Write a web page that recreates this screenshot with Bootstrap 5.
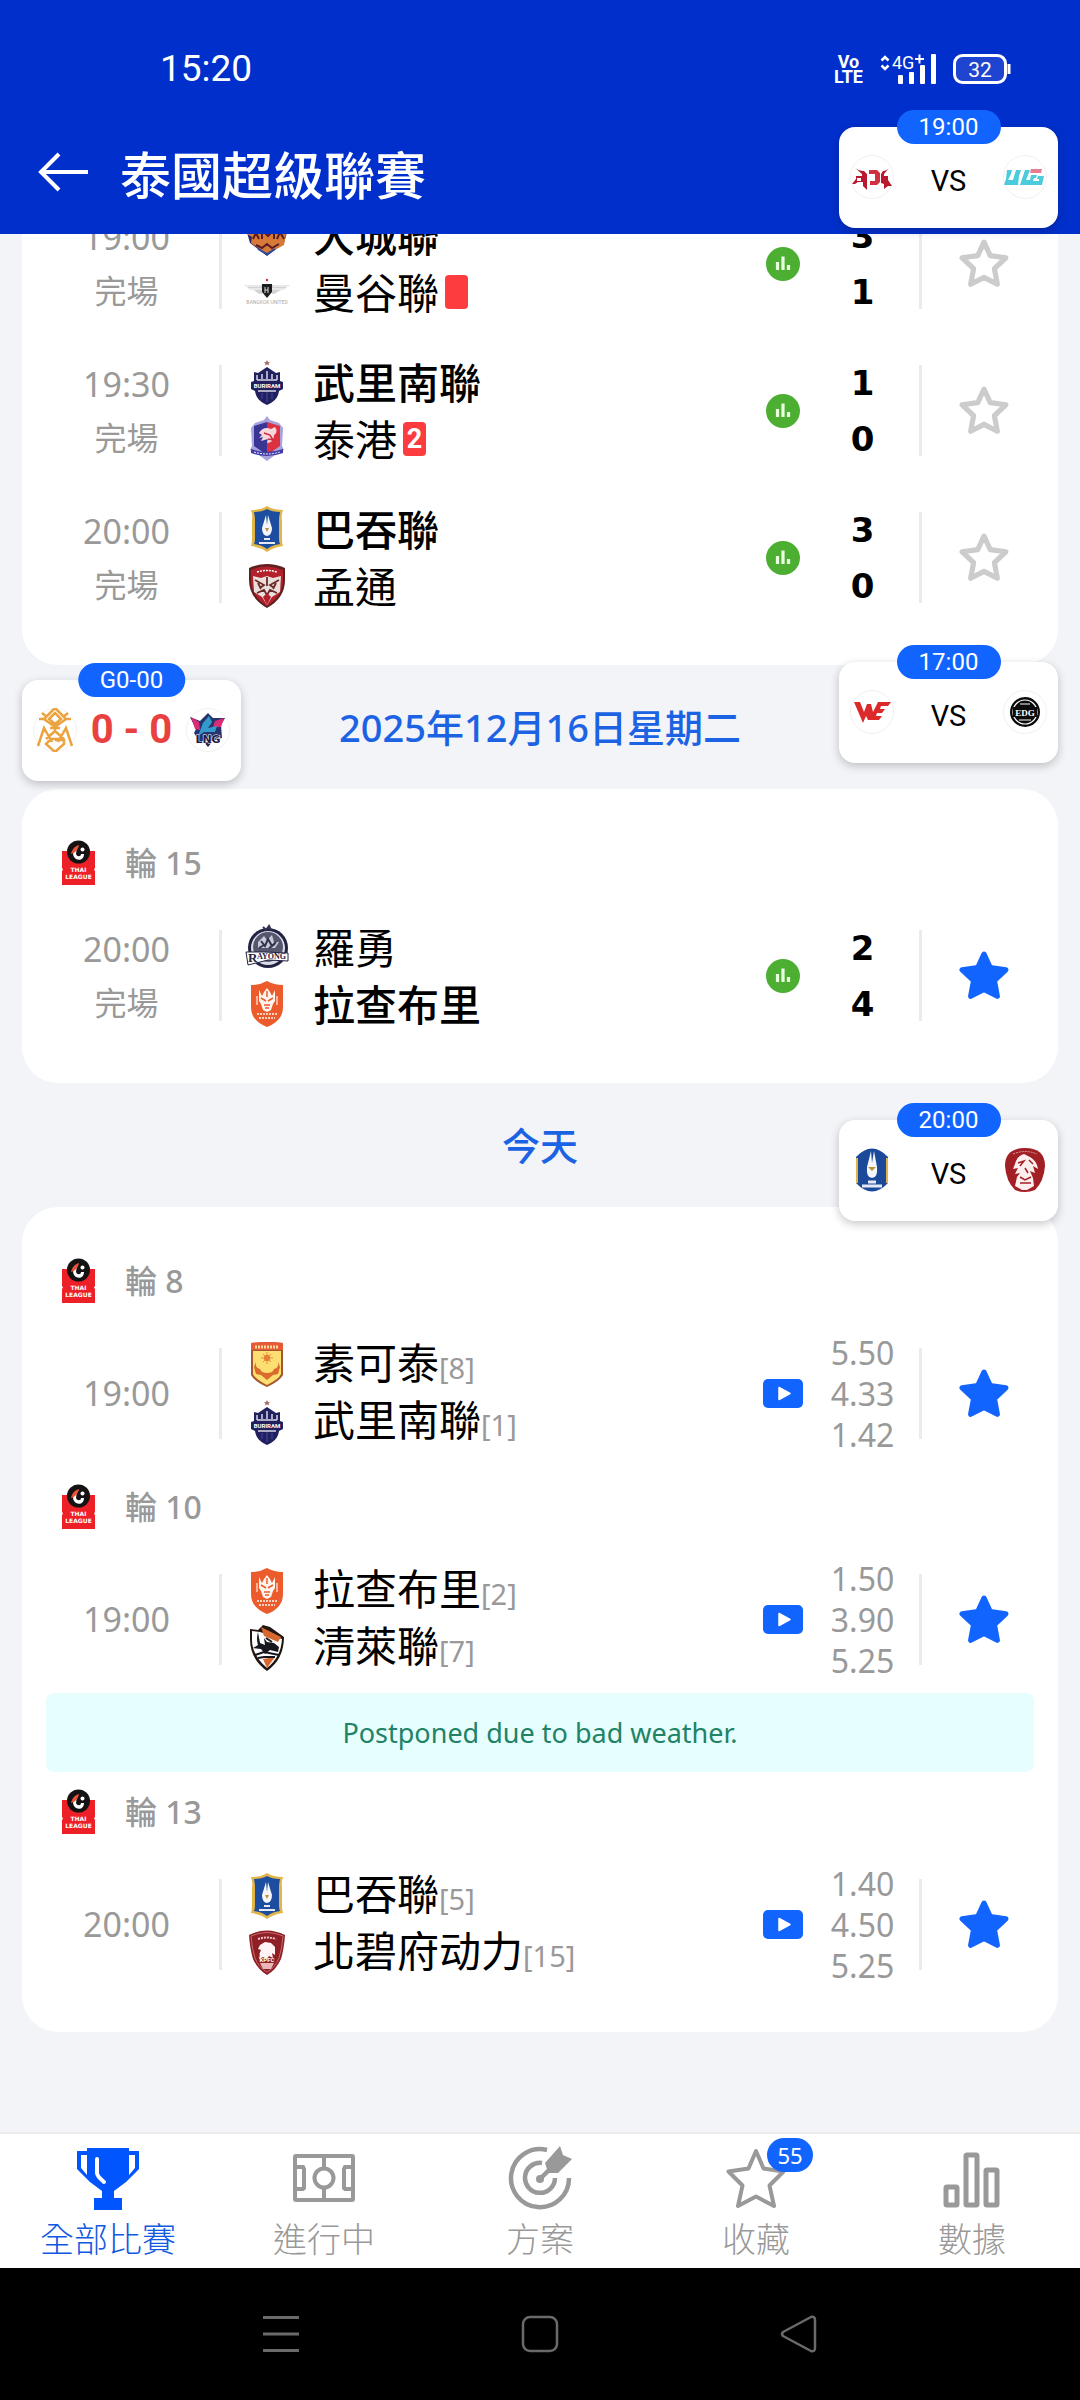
<!DOCTYPE html>
<html lang="zh-Hant">
<head>
<meta charset="utf-8">
<meta name="viewport" content="width=device-width, initial-scale=1">
<title>泰國超級聯賽</title>
<link rel="stylesheet" href="https://cdn.jsdelivr.net/npm/bootstrap@5.3.0/dist/css/bootstrap.min.css">
<style>
  :root { --brand: #1264ff; --grey: #999; --line: #ebebed; }
  body { background: #f2f4f8; color: #000; font-family: "Noto Sans", "Noto Sans CJK TC", sans-serif; }
  svg { display: block; flex: none; }
  .app { min-height: 100vh; }

  /* top bar */
  .topbar { background: #002fcc; color: #fff; z-index: 2; padding-bottom: 22px; }
  .statusbar { height: 138px; padding-left: 160px; padding-right: 68px; font-family: Roboto, sans-serif; }
  .clock { font-size: 37px; line-height: 46px; }
  .volte { font: 700 18px/15px "Liberation Sans Narrow", Roboto, sans-serif; }
  .titlebar { height: 74px; padding-left: 36px; gap: 30px; }
  .titlebar h1 { font-size: 51px; line-height: 74px; font-weight: 500; }

  /* match cards */
  .feed { padding: 0 22px; margin-top: -44px; }
  .panel { background: #fff; border-radius: 36px; padding: 34px 12px; }
  .panel.first { padding-top: 0; border-radius: 0 0 36px 36px; }
  .day { height: 124px; color: #1c63e4; font-size: 38px; line-height: 124px; font-weight: 500; }
  .round { height: 79px; padding: 0 28px; gap: 30px; color: var(--grey); font-size: 32px; font-weight: 500; }
  .match { height: 147px; }
  .when { width: 185px; color: var(--grey); font-size: 34px; line-height: 53px; }
  .when small { display: block; font-size: 32px; }
  .rule { width: 3px; height: 91px; background: var(--line); }
  .teams { padding-left: 22px; }
  .team { height: 57px; gap: 23px; font-size: 42px; line-height: 57px; white-space: nowrap; }
  .team i { color: var(--grey); font-size: 29px; font-style: normal; }
  .won { font-weight: 500; }
  .redcard { width: 23px; height: 34px; border-radius: 4px; background: #fd3c40; color: #fff; font: 700 27px/34px Roboto, sans-serif; margin-left: 6px; }
  .media { width: 46px; }
  .score { width: 113px; font: 700 34px/56px "DejaVu Sans", sans-serif; }
  .odds { width: 113px; color: var(--grey); font-size: 32px; line-height: 41px; }
  .fav { width: 124px; color: var(--brand); }
  .fav.off { color: #ccc; }
  .notice { height: 79px; margin: 0 12px; border-radius: 8px; background: #e6fffe; color: #218266; font: 400 27px/79px "Noto Sans", sans-serif; }

  /* floating match widgets */
  .floater { position: absolute; right: 22px; z-index: 3; width: 219px; height: 101px; border-radius: 16px; background: #fff; color: #000; box-shadow: 0 3px 10px rgba(0,0,0,.22); padding: 0 11px 2px; font-family: Roboto, sans-serif; text-decoration: none; }
  .floater b { position: absolute; top: -17px; left: 50%; transform: translateX(-50%); min-width: 104px; height: 34px; padding: 0 22px; border-radius: 17px; background: var(--brand); color: #fff; font-weight: 400; font-size: 24px; line-height: 34px; text-align: center; white-space: nowrap; }
  .floater span { font-size: 29px; line-height: 44px; padding-top: 8px; }
  .floater .live { font-size: 40px; font-weight: 700; color: #e9413f; padding-top: 0; }
  .f1 { top: 127px; } .f2 { top: 662px; } .f3 { top: 1120px; }
  .f4 { top: 680px; right: auto; left: 22px; }

  /* bottom bars */
  .tabs { background: #fff; border-top: 2px solid #ebebeb; height: 136px; padding-top: 10px; }
  .tabs a { color: var(--grey); text-decoration: none; font-size: 34px; line-height: 46px; font-weight: 300; }
  .tabs a.active { color: #1259e2; }
  .count { position: absolute; left: 44px; top: -6px; width: 46px; height: 34px; border-radius: 17px; background: var(--brand); color: #fff; font: 400 22px/34px "Noto Sans", sans-serif; }
  .sysnav { background: #000; height: 132px; color: #6a6a6a; }
  .sysnav button { width: 24%; }
</style>
<script src="https://cdn.jsdelivr.net/npm/bootstrap@5.3.0/dist/js/bootstrap.bundle.min.js"></script>
</head>
<body>

<svg width="0" height="0" class="position-absolute" aria-hidden="true">
  <defs>
    <symbol id="star" viewBox="0 0 48 48"><path d="M24 3 30 16 45 18 34 28.500 36.800 43.500 24 36.800 11.200 43.500 14 28.500 3 18 18 16Z" stroke="currentColor" stroke-width="5" stroke-linejoin="round"/></symbol>
    <symbol id="stats" viewBox="0 0 34 34"><circle cx="17" cy="17" r="17" fill="#4caf32"/><path d="M11.500 15v8M17 9.500v13.500M22.500 18v5" stroke="#eaffdf" stroke-width="3.200"/></symbol>
    <symbol id="play" viewBox="0 0 40 29"><rect width="40" height="29" rx="5" fill="#1264ff"/><path d="M16 8.500v12l11-6z" fill="#fff" stroke="#fff" stroke-width="1.500" stroke-linejoin="round"/></symbol>

    <symbol id="league" viewBox="0 0 33 44">
      <path d="M0 10H33V27l-1 1.500 1 1.500V44H0V30l1-1.500L0 27Z" fill="#ee2027"/>
      <circle cx="16.500" cy="11" r="11.500" fill="#151213"/>
      <path d="M15 6c-5 4-5 9-1 12 4 2 8 0 8-5l-3 0c0 3-4 3-5 0Z" fill="#fff"/><path d="M17 4c-4 1-7 4-8 9 4-1 7-4 8-9" fill="#e8543b"/><circle cx="20.500" cy="8.500" r="2" fill="#fff"/>
      <text x="16.500" y="31" font-family="DejaVu Sans" font-size="6" font-weight="700" fill="#fff" text-anchor="middle">THAI</text>
      <text x="16.500" y="38" font-family="DejaVu Sans" font-size="6" font-weight="700" fill="#fff" text-anchor="middle">LEAGUE</text>
    </symbol>

    <symbol id="ayutthaya" viewBox="0 0 46 46">
      <path d="M2 17 23 3l21 14-4 14-17 13L6 31Z" fill="#292765"/><path d="M3 22l10-3 3-3 6 3 5-3 5 4 11-4-3 17-17 9-16-11 1-6Z" fill="#d77a38"/>
      <path d="M9 27l3-6 3 6m3-6v6m3-6 3 3 3-3m3 6v-7m3 7 3-7 4 7M12 33l6 3 5-4 5 4 7-4" fill="none" stroke="#5a1d24" stroke-width="2"/><path d="M14 37l9 5 8-5" stroke="#2c4a9b" stroke-width="2" fill="none"/>
    </symbol>
    <symbol id="bangkok" viewBox="0 0 46 46">
      <path d="M0 16h18v9C13 25 12 21 8 21 4 21 5 18 0 16ZM46 16H28v9c5 0 6-4 10-4 4 0 3-3 8-5Z" fill="#d2d2d2"/><path d="M2 17h15M5 20h13M29 17h15M28 20h13" stroke="#fff"/>
      <path d="M18 15h10v8l-5 6-5-6Z" fill="#1d1d1f"/><path d="M21 18v6m0-3h3m0-3v6" stroke="#ddd" stroke-width="1"/><circle cx="23" cy="11" r="1.200" fill="#c33"/>
      <text x="23" y="35" font-family="Roboto" font-size="5" fill="#aaa" text-anchor="middle">BANGKOK UNITED</text>
    </symbol>
    <symbol id="buriram" viewBox="0 0 46 46">
      <path d="M23 1l1 2h2l-1.500 1.500.5 2L23 5.500 21 6.500l.5-2L20 3h2Z" fill="#a76d6a"/>
      <path d="M10 13l4 1 3-2 6-4 6 4 3 2 4-1v9l3 1v7l-4 2c-1 7-5 11-12 14-7-3-11-7-12-14l-4-2v-7l3-1Z" fill="#20205f"/>
      <path d="M13 16v5M18 15v5M23 12v8M28 15v5M33 16v5M13 21h20M14 32h18" stroke="#d6d6e8" stroke-width="1.500"/>
      <path d="M18 34v6M23 33v10M28 34v6" stroke="#4b4ba0" stroke-width="1"/>
      <text x="23" y="28.500" font-family="Roboto" font-size="6" font-weight="700" fill="#fff" text-anchor="middle">BURIRAM</text>
    </symbol>
    <symbol id="port" viewBox="0 0 46 46">
      <path d="M23 0l3 4 9 3 4 5-1 18 2 4-9 5-8 6-8-6-9-5 2-4-1-18 4-5 9-3Z" fill="#a7a3dc"/>
      <path d="M23 6l13 4v20l-13 9V6Z" fill="#dd3040"/><path d="M23 6 10 10v20l13 9Z" fill="#3a3494"/>
      <path d="M15 17c3-5 7-6 12-4l4-2c3 4 1 7-1 8 0 5-3 8-7 8l1-4-7 2 2-4-4 1 3-3Z" fill="#f6d7dc"/><path d="M20 17l6 2 3 5-5-1" stroke="#cf2740" fill="none" stroke-width="1.500"/>
      <path d="M7 33q16 6 32 0v4q-16 6-32 0Z" fill="#3e3aa6"/><path d="M10 36q13 4 26 0" stroke="#fff" fill="none" stroke-dasharray="2 1"/>
    </symbol>
    <symbol id="bgpathum" viewBox="0 0 46 46">
      <path d="M7 4q10 0 16-4 6 4 16 4-2 6-1 10v19q0 4 1 7-9 1-16 6-7-5-16-6 1-3 1-7V14q1-4-1-10Z" fill="#e2b548"/>
      <path d="M10 6q8 0 13-3 5 3 13 3-1 5-1 8v19q0 3 1 5-8 1-13 5-5-4-13-5 1-2 1-5V14q0-3-1-8Z" fill="#1c4d9f"/>
      <path d="M22 9l-4 13q0 7 5 8 5-1 5-8L24 9l-1 10Z" fill="#f4f6fb"/><path d="M21 22h4l-2 4Z" fill="#b89339"/><path d="M20 33h6M15 37h16" stroke="#e6e9f5" stroke-width="2"/>
    </symbol>
    <symbol id="muangthong" viewBox="0 0 46 46">
      <path d="M5 5q18-8 36 0v12q0 18-18 28Q5 35 5 17Z" fill="#5f2020"/><path d="M7 7q16-7 32 0v10q0 16-16 26Q7 33 7 17Z" fill="#b3202b"/>
      <path d="M9 13l8 2 6-2 6 2 8-2-1 16-8 5-5 8-5-8-8-5Z" fill="#e9dfdb"/>
      <path d="M11 17l9 5-4 3M35 17l-9 5 4 3M23 14v9M13 30l7-3 3 5 3-5 7 3M14 20l3 6M32 20l-3 6" stroke="#6b2a28" stroke-width="1.800" fill="none"/><path d="M19 34l4-4 4 4-4 8Z" fill="#b3202b"/><path d="M13 9q10-3 20 0" stroke="#fff" stroke-width="1.500" stroke-dasharray="2 1" fill="none"/>
    </symbol>
    <symbol id="rayong" viewBox="0 0 46 46">
      <circle cx="24" cy="24" r="20" fill="#222342"/><circle cx="24" cy="24" r="17" fill="#dcdce6"/><circle cx="24" cy="23" r="15" fill="#55576f"/>
      <path d="M14 18l6-6 3 4 5-5 2 7 5 0-4 6H14Z" fill="#c9cad8"/><path d="M17 17l4 5 3-7 4 7 4-4M15 24l5-3m5 3 6-4M19 3l3 3 3-4 2 4" stroke="#30324f" fill="none" stroke-width="2"/>
      <path d="M2 28l18 0 24 1v8L24 36 4 41Z" fill="#fff" stroke="#222342"/>
      <text x="4" y="38" font-family="Liberation Serif" font-size="13" font-weight="700" fill="#22233f">R</text><text x="13" y="35" font-family="Liberation Serif" font-size="8" font-weight="700" fill="#22233f">AYONG</text>
    </symbol>
    <symbol id="ratchaburi" viewBox="0 0 46 46">
      <path d="M7 4q9 0 16-4 7 4 16 4v22q0 14-16 20Q7 40 7 26Z" fill="#ec5b2b"/>
      <path d="M15 9l3 6 2-4 3-4 3 4 2 4 3-6 0 11-2 3-2 6-4 2-4-2-2-6-2-3Z" fill="#fff5ef"/><path d="M17 17l5 3m7-3-5 3M20 24h6M21 27h4M23 10v6" stroke="#ec5b2b" stroke-width="1.500"/><path d="M13 24v-9m20 0v9" stroke="#fbd2bf" stroke-width="1.500"/><path d="M13 33h20M15 37h16" stroke="#fbd2bf" stroke-width="1.800" stroke-dasharray="2 1"/>
    </symbol>
    <symbol id="sukhothai" viewBox="0 0 46 46">
      <path d="M7 1q16-2 32 0v32q-3 6-16 12Q10 39 7 33Z" fill="#a5572d"/><path d="M9 9h28v23q-2 5-14 11Q11 37 9 32Z" fill="#fcdf70"/><path d="M7 1q16-2 32 0v7H7Z" fill="#e65a35"/><path d="M11 5h24" stroke="#fbd99a" stroke-width="3" stroke-dasharray="2 1"/>
      <path d="M12 20q-1 6 4 7 1 4 7 4t7-4q5-1 4-7l2 5-2 7-5 1-6 5-6-5-5-1-2-7Z" fill="#da6b2d"/><circle cx="23" cy="16" r="3" fill="#e1632c"/><path d="M23 10v12M17 16h12M19 12l8 8m0-8-8 8" stroke="#e98a3f"/>
    </symbol>
    <symbol id="chiangrai" viewBox="0 0 46 46">
      <path d="M6 4l8 1 5-5 7 2 14 10q0 22-17 34Q6 34 6 14Z" fill="#21150f"/><path d="M8 6l8 1 22 7q-1 18-15 29Q8 30 8 15Z" fill="#fff"/>
      <path d="M17 2l20 10-3 5-14-6Z" fill="#d6692f"/><path d="M19 34l12-2-8 11Z" fill="#d6692f"/>
      <path d="M14 7q-2 8 0 13l-5 3 8 1 4 5 5-4 8 2 1-5-5-4-7-1-3-4 1 7-5-2Z" fill="#17171f"/><path d="M11 30l9-3 15 3M14 33l6-1 11 0M22 13l6 4" stroke="#17171f" stroke-width="2" fill="none"/>
    </symbol>
    <symbol id="kanchanaburi" viewBox="0 0 46 46">
      <path d="M5 5q18-9 36 0-1 14-4 24-5 11-14 16Q14 40 9 29 6 19 5 5Z" fill="#8e1f27"/><path d="M7 6q16-7 32 0-1 13-4 22-4 10-12 14-8-4-12-14Q8 19 7 6Z" fill="none" stroke="#c6696b"/>
      <path d="M15 25l2-5-3-1 2-4 5-3 6 1 4 4 0 8-3-2 1 5-4-2-2 3-4-2-4 2 1-5Z" fill="#fff5f4"/><path d="M14 9q9-3 18 0" stroke="#f0c4c4" stroke-width="2" stroke-dasharray="2 1" fill="none"/><path d="M16 33h14l-3 6h-8Z" fill="#eab7b8"/>
      <text x="23" y="32" font-family="Roboto" font-size="6" font-weight="700" fill="#fff" text-anchor="middle">KPFC</text>
    </symbol>

    <symbol id="ring" viewBox="0 0 44 44"><circle cx="22" cy="22" r="21.500" fill="#fff" stroke="#f3f0f0"/></symbol>
    <symbol id="jdg" viewBox="0 0 44 44"><use href="#ring"/><path d="M4 12q4 4 10 4l3 3v16l-4-4v-4H8l-3 2-3 0 4-5v-3h6v-2Z" fill="#b9182f"/><path d="M19 15h8l3 3v9l-3 3h-7v-4h5v-7h-6Z" fill="#d0303f"/><path d="M40 12q-3 4-7 4l-2 3v9l3 1v5l4-3h4l-4-6v-4h-4v-2Z" fill="#b9182f"/><path d="M7 23h4v3H7Z" fill="#fff"/></symbol>
    <symbol id="blg" viewBox="0 0 44 44"><use href="#ring"/><path d="M4 15h5l-1 4-3 6h5l3-10h5l-2 6-1 9H1l2-6ZM22 15h5l-4 10h5l-1 5H17ZM28 20h6l-1 3h-2l-1 3h6l0-2h-2l1-3h6l-2 9H26Z" fill="#4bcbdc"/><path d="M28 14h11l-1 4H27Z" fill="#e77c91"/></symbol>
    <symbol id="we" viewBox="0 0 44 44"><use href="#ring"/><path d="M4 12h6l4 10 3-8h4l2 8 5-10h13l-3 4h-7l-1 3h5l-3 4h-5l-1 3h6l-3 4H18l-2-4-3 7Z" fill="#dc2a2b"/></symbol>
    <symbol id="edg" viewBox="0 0 44 44"><use href="#ring"/><circle cx="22" cy="22" r="15" fill="#0b0b0b"/><circle cx="22" cy="22" r="12" fill="none" stroke="#fff" stroke-width="1.200"/><path d="M10 17h24v10H10Z" fill="#0b0b0b"/><text x="22" y="25.500" font-family="Liberation Serif" font-size="9" font-weight="700" fill="#fff" text-anchor="middle">EDG</text><path d="M17 14h10M16 30h12" stroke="#aaa" stroke-width="1.500"/></symbol>
    <symbol id="orange" viewBox="0 0 44 44"><use href="#ring"/><path d="M11 11l6-6 5-5 5 5 6 6-7 5-4 3-4-3Zm5 0 6-6 6 6-6 5ZM6 11h5M33 11h5M9 5l5 4M35 5l-5 4M5 38l6-18 8 14M39 38l-6-18-8 14M22 20v5m-5-5h10M13 31l9-8 9 8M30 31H18l-5 5 9 8 9-8v-4h-9" fill="none" stroke="#eba33f" stroke-width="2.500"/></symbol>
    <symbol id="lng" viewBox="0 0 44 44"><use href="#ring"/><path d="M4 9l10 4 8-8 5 5 12 0-4 7 1 13-10 3-13 0-5-8 2-4Z" fill="#27356f"/><path d="M5 9l8 5 1 8-5-1ZM38 10l-9 3-2 6 8 0Z" fill="#dc2a77"/><path d="M17 15l6-7 3 6-4 6 9-2-2 6-11 0-6 4Z" fill="#3499cb"/><path d="M18 34h8l-4 5Z" fill="#27204b"/><text x="22" y="35" font-family="DejaVu Sans" font-size="11" font-weight="700" fill="#251b49" stroke="#fff" stroke-width="1" paint-order="stroke" text-anchor="middle">LNG</text></symbol>
    <symbol id="bgcrop" viewBox="0 0 44 44"><path d="M6 9Q22-8 38 9v26q-16 17-32 0Z" fill="#1c4a9a"/><path d="M7 10v25M37 10v25" stroke="#e2b24b" stroke-width="2"/><path d="M21 3l-4 16q-1 11 5 11t5-11L24 3l-2 12Z" fill="#f4f6fb"/><path d="M18 19h8l-4 4Z" fill="#b89339"/><path d="M18 34h8M12 38h20" stroke="#e6e9f5" stroke-width="3"/></symbol>
    <symbol id="kcrop" viewBox="0 0 44 44"><path d="M2 18Q2 0 22 0t20 18q-1 15-10 24-10 4-20 0Q3 33 2 18Z" fill="#a31f26"/><path d="M12 16q2-8 9-10l6 3q7 4 8 12l-5-3 2 7-5-2 3 7 1 8-7 4h-5l-7-4 2-9 3-4-5 1 3-6-5 1Z" fill="#fcefee"/><path d="M15 15l6-2-4 5m9-6 4 4M17 29l5 3 6-3m-11 6h11M22 20l3 5" stroke="#a31f26" fill="none" stroke-width="1.500"/><path d="M10 6q12-5 24 0" stroke="#e0a0a0" fill="none" stroke-dasharray="2 1"/></symbol>
  </defs>
</svg>

<div class="app d-flex flex-column position-relative">

  <header class="topbar position-relative">
    <div class="statusbar d-flex align-items-center justify-content-between">
      <span class="clock">15:20</span>
      <div class="d-flex align-items-center gap-3">
        <div class="volte text-center">Vo<br>LTE</div>
        <svg width="58" height="32" viewBox="0 0 58 32" fill="#fff"><path d="M2.500 7.500 6 4l3.500 3.500M2.500 12.500 6 16l3.500-3.500" fill="none" stroke="#fff" stroke-width="2.500"/><text x="13" y="16" font-family="Roboto" font-size="18">4G</text><path d="M36 6h9M40.500 1.500v9" stroke="#fff" stroke-width="2"/><rect x="19" y="22" width="5" height="9" rx="1"/><rect x="30" y="19" width="5" height="12" rx="1"/><rect x="41" y="12" width="5" height="19" rx="1"/><rect x="52" y="1" width="5" height="30" rx="1"/></svg>
        <svg width="59" height="32" viewBox="0 0 59 32"><rect x="1.500" y="2.500" width="51" height="27" rx="8" fill="#1f44cf" stroke="#fff" stroke-width="3"/><path d="M56 11v10" stroke="#fff" stroke-width="3"/><text x="27" y="23.500" font-family="Roboto" font-size="21" fill="#fff" text-anchor="middle">32</text></svg>
      </div>
    </div>
    <div class="titlebar d-flex align-items-center">
      <button class="btn p-0 border-0 text-white" aria-label="返回"><svg width="54" height="46" viewBox="0 0 54 46"><path d="M23 2 5 20l18 18M5 20h47" fill="none" stroke="#fff" stroke-width="4"/></svg></button>
      <h1 class="m-0">泰國超級聯賽</h1>
    </div>
  </header>

  <a class="floater f1 d-flex align-items-center justify-content-between" href="#"><b>19:00</b><svg width="44" height="44"><use href="#jdg"/></svg><span>VS</span><svg width="44" height="44"><use href="#blg"/></svg></a>
  <a class="floater f2 d-flex align-items-center justify-content-between" href="#"><b>17:00</b><svg width="44" height="44"><use href="#we"/></svg><span>VS</span><svg width="44" height="44"><use href="#edg"/></svg></a>
  <a class="floater f3 d-flex align-items-center justify-content-between" href="#"><b>20:00</b><svg width="44" height="44"><use href="#bgcrop"/></svg><span>VS</span><svg width="44" height="44"><use href="#kcrop"/></svg></a>
  <a class="floater f4 d-flex align-items-center justify-content-between" href="#"><b>G0-00</b><svg width="44" height="44"><use href="#orange"/></svg><span class="live">0 - 0</span><svg width="44" height="44"><use href="#lng"/></svg></a>

  <main class="feed">
    <section class="panel first">
      <div class="match d-flex align-items-center">
        <div class="when text-center">19:00<small>完場</small></div><div class="rule"></div>
        <div class="teams flex-grow-1">
          <div class="team d-flex align-items-center"><svg width="46" height="46"><use href="#ayutthaya"/></svg><span class="won">大城聯</span></div>
          <div class="team d-flex align-items-center"><svg width="46" height="46"><use href="#bangkok"/></svg><span class="d-flex align-items-center">曼谷聯<span class="redcard"></span></span></div>
        </div>
        <div class="media d-flex justify-content-center"><svg width="34" height="34"><use href="#stats"/></svg></div>
        <div class="score text-center">3<br>1</div><div class="rule"></div>
        <button class="fav off btn p-0 border-0 d-flex justify-content-center" aria-label="收藏"><svg width="50" height="50" fill="#fff"><use href="#star"/></svg></button>
      </div>
      <div class="match d-flex align-items-center">
        <div class="when text-center">19:30<small>完場</small></div><div class="rule"></div>
        <div class="teams flex-grow-1">
          <div class="team d-flex align-items-center"><svg width="46" height="46"><use href="#buriram"/></svg><span class="won">武里南聯</span></div>
          <div class="team d-flex align-items-center"><svg width="46" height="46"><use href="#port"/></svg><span class="d-flex align-items-center">泰港<span class="redcard text-center">2</span></span></div>
        </div>
        <div class="media d-flex justify-content-center"><svg width="34" height="34"><use href="#stats"/></svg></div>
        <div class="score text-center">1<br>0</div><div class="rule"></div>
        <button class="fav off btn p-0 border-0 d-flex justify-content-center" aria-label="收藏"><svg width="50" height="50" fill="#fff"><use href="#star"/></svg></button>
      </div>
      <div class="match d-flex align-items-center">
        <div class="when text-center">20:00<small>完場</small></div><div class="rule"></div>
        <div class="teams flex-grow-1">
          <div class="team d-flex align-items-center"><svg width="46" height="46"><use href="#bgpathum"/></svg><span class="won">巴吞聯</span></div>
          <div class="team d-flex align-items-center"><svg width="46" height="46"><use href="#muangthong"/></svg><span>孟通</span></div>
        </div>
        <div class="media d-flex justify-content-center"><svg width="34" height="34"><use href="#stats"/></svg></div>
        <div class="score text-center">3<br>0</div><div class="rule"></div>
        <button class="fav off btn p-0 border-0 d-flex justify-content-center" aria-label="收藏"><svg width="50" height="50" fill="#fff"><use href="#star"/></svg></button>
      </div>
    </section>

    <h2 class="day text-center m-0">2025年12月16日星期二</h2>

    <section class="panel">
      <div class="round d-flex align-items-center"><svg width="33" height="46"><use href="#league"/></svg>輪 15</div>
      <div class="match d-flex align-items-center">
        <div class="when text-center">20:00<small>完場</small></div><div class="rule"></div>
        <div class="teams flex-grow-1">
          <div class="team d-flex align-items-center"><svg width="46" height="46"><use href="#rayong"/></svg><span>羅勇</span></div>
          <div class="team d-flex align-items-center"><svg width="46" height="46"><use href="#ratchaburi"/></svg><span class="won">拉查布里</span></div>
        </div>
        <div class="media d-flex justify-content-center"><svg width="34" height="34"><use href="#stats"/></svg></div>
        <div class="score text-center">2<br>4</div><div class="rule"></div>
        <button class="fav btn p-0 border-0 d-flex justify-content-center" aria-label="取消收藏"><svg width="50" height="50" fill="currentColor"><use href="#star"/></svg></button>
      </div>
    </section>

    <h2 class="day text-center m-0">今天</h2>

    <section class="panel">
      <div class="round d-flex align-items-center"><svg width="33" height="46"><use href="#league"/></svg>輪 8</div>
      <div class="match d-flex align-items-center">
        <div class="when text-center">19:00</div><div class="rule"></div>
        <div class="teams flex-grow-1">
          <div class="team d-flex align-items-center"><svg width="46" height="46"><use href="#sukhothai"/></svg><span>素可泰<i>[8]</i></span></div>
          <div class="team d-flex align-items-center"><svg width="46" height="46"><use href="#buriram"/></svg><span>武里南聯<i>[1]</i></span></div>
        </div>
        <div class="media d-flex justify-content-center"><svg width="40" height="29"><use href="#play"/></svg></div>
        <div class="odds text-center">5.50<br>4.33<br>1.42</div><div class="rule"></div>
        <button class="fav btn p-0 border-0 d-flex justify-content-center" aria-label="取消收藏"><svg width="50" height="50" fill="currentColor"><use href="#star"/></svg></button>
      </div>

      <div class="round d-flex align-items-center"><svg width="33" height="46"><use href="#league"/></svg>輪 10</div>
      <div class="match d-flex align-items-center">
        <div class="when text-center">19:00</div><div class="rule"></div>
        <div class="teams flex-grow-1">
          <div class="team d-flex align-items-center"><svg width="46" height="46"><use href="#ratchaburi"/></svg><span>拉查布里<i>[2]</i></span></div>
          <div class="team d-flex align-items-center"><svg width="46" height="46"><use href="#chiangrai"/></svg><span>清萊聯<i>[7]</i></span></div>
        </div>
        <div class="media d-flex justify-content-center"><svg width="40" height="29"><use href="#play"/></svg></div>
        <div class="odds text-center">1.50<br>3.90<br>5.25</div><div class="rule"></div>
        <button class="fav btn p-0 border-0 d-flex justify-content-center" aria-label="取消收藏"><svg width="50" height="50" fill="currentColor"><use href="#star"/></svg></button>
      </div>
      <div class="notice text-center">Postponed due to bad weather.</div>

      <div class="round d-flex align-items-center"><svg width="33" height="46"><use href="#league"/></svg>輪 13</div>
      <div class="match d-flex align-items-center">
        <div class="when text-center">20:00</div><div class="rule"></div>
        <div class="teams flex-grow-1">
          <div class="team d-flex align-items-center"><svg width="46" height="46"><use href="#bgpathum"/></svg><span>巴吞聯<i>[5]</i></span></div>
          <div class="team d-flex align-items-center"><svg width="46" height="46"><use href="#kanchanaburi"/></svg><span>北碧府动力<i>[15]</i></span></div>
        </div>
        <div class="media d-flex justify-content-center"><svg width="40" height="29"><use href="#play"/></svg></div>
        <div class="odds text-center">1.40<br>4.50<br>5.25</div><div class="rule"></div>
        <button class="fav btn p-0 border-0 d-flex justify-content-center" aria-label="取消收藏"><svg width="50" height="50" fill="currentColor"><use href="#star"/></svg></button>
      </div>
    </section>
  </main>

  <div class="mt-auto">
    <nav class="tabs nav nav-fill flex-nowrap text-center">
      <a class="col active d-flex flex-column align-items-center gap-1" href="#"><svg width="66" height="68" viewBox="0 0 66 68"><path d="M12 4h42v3h10v18L51 38l-12 9v7h8v12H19V54h8v-7L15 38 2 25V7h10Z" fill="#0055ff"/><path d="M6 11h6v20l-6-7ZM60 11h-6v20l6-7Z" fill="#fff"/><path d="M22 15v14q0 3 7 9" stroke="#fff" stroke-width="4" stroke-linecap="round" fill="none"/></svg>全部比賽</a>
      <a class="col d-flex flex-column align-items-center gap-1" href="#"><svg width="66" height="68" viewBox="0 0 66 68" fill="none" stroke="#999" stroke-width="4"><rect x="4" y="12" width="58" height="44" rx="1"/><circle cx="33" cy="34" r="9.500"/><path d="M33 12v12M33 44v12M4 23h8l1 2v19l-1 1H4M62 23h-8l-1 2v19l1 1h8"/></svg>進行中</a>
      <a class="col d-flex flex-column align-items-center gap-1" href="#"><svg width="66" height="68" viewBox="0 0 66 68" fill="none" stroke="#999" stroke-width="4.500"><path d="M40 6A29 29 0 1 0 62 34M35 19A15 15 0 1 0 48 34M32 36 44 24"/><path d="M41 28l-3-9L53 2l3 9 9 4-14 14-9 0Z" fill="#999" stroke="none"/><circle cx="33" cy="35" r="4" fill="#999" stroke="none"/></svg>方案</a>
      <a class="col d-flex flex-column align-items-center gap-1" href="#"><span class="position-relative"><svg width="66" height="68" viewBox="0 0 66 68" fill="none" stroke="#999" stroke-width="4" stroke-linejoin="round"><path d="M33 7 40.500 24.500 60.500 27.500 46.500 41.500 51 62 33 52.500 15 62 19.500 41.500 5.500 27.500 25.500 24.500Z"/></svg><span class="count">55</span></span>收藏</a>
      <a class="col d-flex flex-column align-items-center gap-1" href="#"><svg width="66" height="68" viewBox="0 0 66 68" fill="none" stroke="#999" stroke-width="5"><rect x="7" y="43" width="11" height="18" rx="1"/><rect x="27" y="11" width="11" height="50" rx="1"/><rect x="47" y="26" width="11" height="35" rx="1"/></svg>數據</a>
    </nav>
    <div class="sysnav d-flex justify-content-center align-items-center">
      <button class="btn p-0 border-0 d-flex justify-content-center" aria-label="選單"><svg width="38" height="38" viewBox="0 0 38 38" stroke="#6a6a6a" stroke-width="3"><path d="M1 2.500h36M1 19h36M1 35.500h36"/></svg></button>
      <button class="btn p-0 border-0 d-flex justify-content-center" aria-label="主畫面"><svg width="38" height="38" viewBox="0 0 38 38" fill="none" stroke="#6a6a6a" stroke-width="2.500"><rect x="2" y="2" width="34" height="34" rx="7"/></svg></button>
      <button class="btn p-0 border-0 d-flex justify-content-center" aria-label="返回"><svg width="38" height="38" viewBox="0 0 38 38" fill="none" stroke="#6a6a6a" stroke-width="2.500" stroke-linejoin="round"><path d="M3 17 31 2q4-1 4 3v28q0 4-4 3L3 21q-2-2 0-4Z"/></svg></button>
    </div>
  </div>
</div>
</body>
</html>
